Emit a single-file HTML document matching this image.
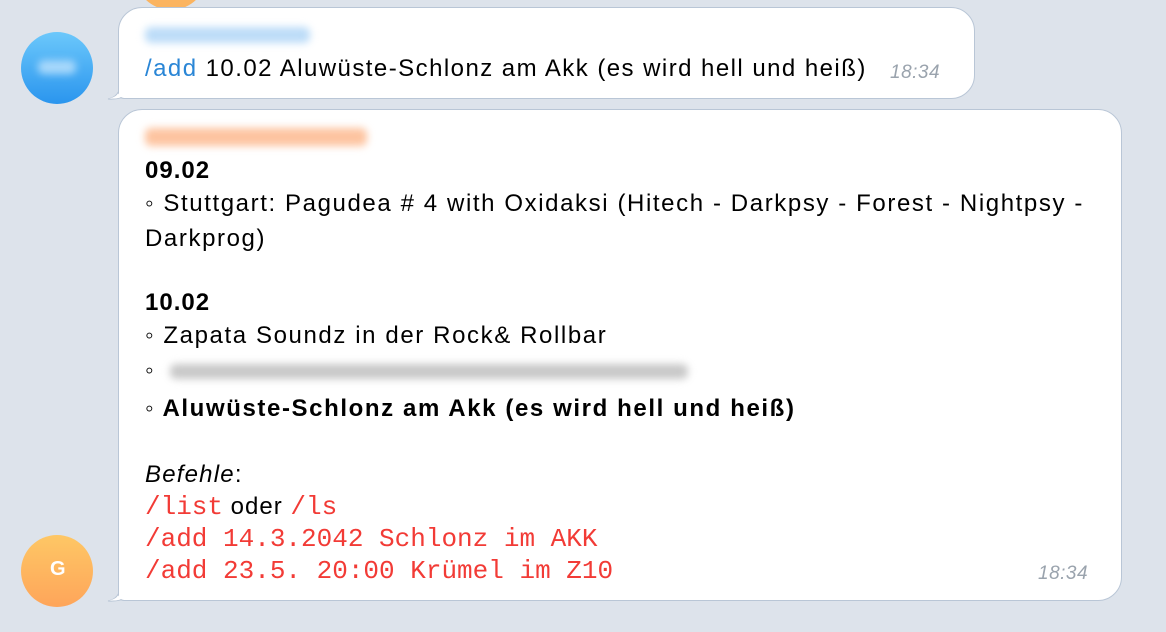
<!DOCTYPE html>
<html><head><meta charset="utf-8"><style>
*{margin:0;padding:0;box-sizing:border-box}
body{width:1166px;height:632px;overflow:hidden;background:#dde3eb;font-family:"Liberation Sans",sans-serif;position:relative;color:#000}
.av{position:absolute;width:72px;height:72px;border-radius:50%}
.b{position:absolute;background:#fff;border:1px solid #b9c6d6;border-radius:24px}
.tail{position:absolute}
.t{position:absolute;font-size:24px;letter-spacing:1.6px;white-space:nowrap}
.t b{letter-spacing:1.6px}
.m{font-family:"Liberation Mono",monospace;color:#f23b36;font-size:26px;letter-spacing:0}
.blur{position:absolute;filter:blur(4px);border-radius:6px}
.time{position:absolute;font-style:italic;color:#9aa3ad;font-size:19px;letter-spacing:0.5px}
</style></head><body>
<div class="av" style="left:135px;top:-62px;background:#fbb460"></div>
<div class="av" style="left:21px;top:32px;background:linear-gradient(#6cc8fb,#2a95ee)"></div>
<div class="blur" style="left:38px;top:60px;width:38px;height:14px;background:#a8d8fb"></div>
<div class="av" style="left:21px;top:535px;background:linear-gradient(#fec765,#fea55a)"></div>
<div class="t" style="left:50px;top:558px;color:#fff;font-weight:bold;font-size:20px;letter-spacing:0">G</div>

<svg class="tail" style="left:104px;top:70px" width="30" height="30"><path d="M15 0 L15 20 Q13 27 4 29 Q18 30 26 23 L30 0Z" fill="#fff" stroke="#b9c6d6"/></svg>
<div class="b" style="left:118px;top:7px;width:857px;height:92px;border-bottom-left-radius:6px"></div>
<svg class="tail" style="left:104px;top:70px" width="30" height="30"><path d="M16 0 L16 22 Q13 27 5 28.5 Q18 29 26 22 L30 0Z" fill="#fff"/></svg>
<div class="blur" style="left:145px;top:27px;width:165px;height:16px;background:#bcdcf8"></div>
<div class="t" style="left:145px;top:55px;letter-spacing:1.45px"><span style="color:#2a86d6">/add</span> 10.02 Aluwüste-Schlonz am Akk (es wird hell und heiß)</div>
<div class="time" style="left:890px;top:62px">18:34</div>

<svg class="tail" style="left:104px;top:572px" width="30" height="30"><path d="M15 0 L15 20 Q13 27 4 29 Q18 30 26 23 L30 0Z" fill="#fff" stroke="#b9c6d6"/></svg>
<div class="b" style="left:118px;top:109px;width:1004px;height:492px;border-bottom-left-radius:6px"></div>
<svg class="tail" style="left:104px;top:572px" width="30" height="30"><path d="M16 0 L16 22 Q13 27 5 28.5 Q18 29 26 22 L30 0Z" fill="#fff"/></svg>
<div class="blur" style="left:145px;top:128px;width:222px;height:18px;background:#fdc4a0"></div>
<div class="t" style="left:145px;top:157px"><b style="letter-spacing:1px">09.02</b></div>
<div class="t" style="left:145px;top:190px">◦ Stuttgart: Pagudea # 4 with Oxidaksi (Hitech - Darkpsy - Forest - Nightpsy -</div>
<div class="t" style="left:145px;top:225px">Darkprog)</div>
<div class="t" style="left:145px;top:289px"><b style="letter-spacing:1px">10.02</b></div>
<div class="t" style="left:145px;top:322px">◦ Zapata Soundz in der Rock&amp; Rollbar</div>
<div class="t" style="left:145px;top:357px">◦</div>
<div class="blur" style="left:170px;top:364px;width:518px;height:15px;background:#c8c8c8"></div>
<div class="t" style="left:145px;top:395px"><b>◦ Aluwüste-Schlonz am Akk (es wird hell und heiß)</b></div>
<div class="t" style="left:145px;top:461px;letter-spacing:1.2px"><i>Befehle</i>:</div>
<div class="t" style="left:145px;top:492px;letter-spacing:1px"><span class="m">/list</span> oder <span class="m">/ls</span></div>
<div class="t m" style="left:145px;top:524px">/add 14.3.2042 Schlonz im AKK</div>
<div class="t m" style="left:145px;top:556px">/add 23.5. 20:00 Krümel im Z10</div>
<div class="time" style="left:1038px;top:563px">18:34</div>
</body></html>
